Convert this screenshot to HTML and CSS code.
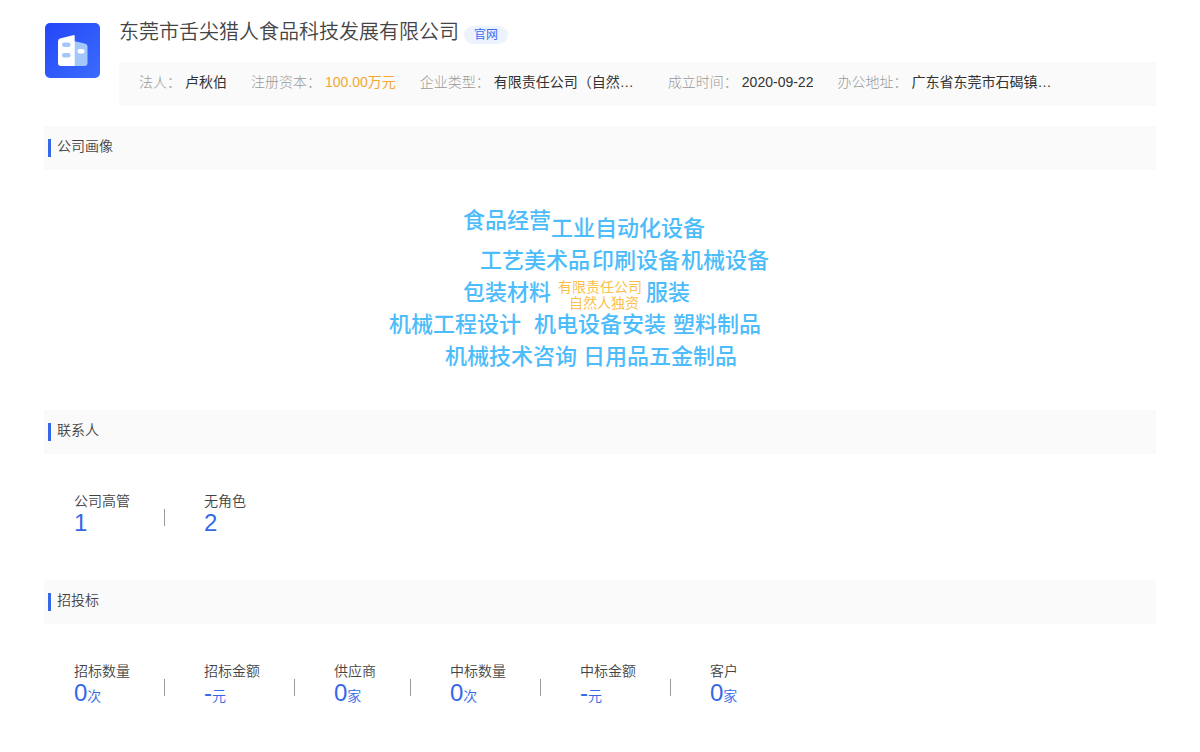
FILE: index.html
```html
<!DOCTYPE html>
<html lang="zh-CN">
<head>
<meta charset="utf-8">
<title>东莞市舌尖猎人食品科技发展有限公司</title>
<link rel="stylesheet" href="styles.css">
</head>
<body>
<main class="page">
  <header class="company">
    <svg class="logo" viewBox="0 0 55 55" aria-hidden="true">
      <defs>
        <linearGradient id="logo-bg" x1="0" y1="0" x2="1" y2="1">
          <stop offset="0" stop-color="#2446f8"/>
          <stop offset="1" stop-color="#3a6cfb"/>
        </linearGradient>
      </defs>
      <rect width="55" height="55" rx="5" fill="url(#logo-bg)"/>
      <path d="M29 18L40.500 20.800Q42.500 21.400 42.500 23.500V40Q42.500 43 39.500 43H29Z" fill="#a3c6fb"/>
      <path d="M15 15.600Q13 16.200 13 18.500V40Q13 43 16 43H29.700V13.300Q29.700 11.800 28 12.200Z" fill="#fff"/>
      <rect x="17" y="19.500" width="8.500" height="4.400" rx="2.200" fill="#a3c6fb"/>
      <rect x="17" y="30" width="8.500" height="4.400" rx="2.200" fill="#a3c6fb"/>
      <rect x="32.500" y="26" width="7" height="4.400" rx="2.200" fill="#fff"/>
    </svg>
    <div class="company-body">
      <div class="title-row">
        <h1 class="title">东莞市舌尖猎人食品科技发展有限公司</h1>
        <a class="site-link" href="#">官网</a>
      </div>
      <dl class="facts">
        <div class="fact"><dt>法人：</dt><dd>卢秋伯</dd></div>
        <div class="fact"><dt>注册资本：</dt><dd class="money">100.00万元</dd></div>
        <div class="fact"><dt>企业类型：</dt><dd class="clipped">有限责任公司（自然…</dd></div>
        <div class="fact"><dt>成立时间：</dt><dd>2020-09-22</dd></div>
        <div class="fact"><dt>办公地址：</dt><dd class="clipped">广东省东莞市石碣镇…</dd></div>
      </dl>
    </div>
  </header>

  <section class="section">
    <h2 class="section-title">公司画像</h2>
    <div class="cloud-area">
      <div class="cloud">
        <span class="word w1">食品经营</span>
        <span class="word w2">工业自动化设备</span>
        <span class="word w3">工艺美术品</span>
        <span class="word w3b">印刷设备</span>
        <span class="word w3c">机械设备</span>
        <span class="word w4">包装材料</span>
        <span class="word core core-type">有限责任公司</span>
        <span class="word core core-owner">自然人独资</span>
        <span class="word w5">服装</span>
        <span class="word w6">机械工程设计</span>
        <span class="word w7">机电设备安装</span>
        <span class="word w8">塑料制品</span>
        <span class="word w9">机械技术咨询</span>
        <span class="word w10">日用品</span>
        <span class="word w11">五金制品</span>
      </div>
    </div>
  </section>

  <section class="section">
    <h2 class="section-title">联系人</h2>
    <ul class="stats">
      <li class="stat"><span class="label">公司高管</span><span class="value">1</span></li>
      <li class="stat"><span class="label">无角色</span><span class="value">2</span></li>
    </ul>
  </section>

  <section class="section">
    <h2 class="section-title">招投标</h2>
    <ul class="stats">
      <li class="stat"><span class="label">招标数量</span><span class="value">0<small>次</small></span></li>
      <li class="stat"><span class="label">招标金额</span><span class="value">-<small>元</small></span></li>
      <li class="stat"><span class="label">供应商</span><span class="value">0<small>家</small></span></li>
      <li class="stat"><span class="label">中标数量</span><span class="value">0<small>次</small></span></li>
      <li class="stat"><span class="label">中标金额</span><span class="value">-<small>元</small></span></li>
      <li class="stat"><span class="label">客户</span><span class="value">0<small>家</small></span></li>
    </ul>
  </section>
</main>
</body>
</html>
```
FILE: styles.css
```css
* {
  box-sizing: border-box;
}

body,
h1,
h2,
dl,
dd,
ul {
  margin: 0;
  padding: 0;
}

body {
  background: #fff;
  color: #444;
  font: 350 14px/20px "Liberation Sans", "Noto Sans CJK SC", sans-serif;
}

.page {
  padding: 16px 44px 0;
}

.company {
  display: flex;
  gap: 19px;
  padding-left: 1px;
  margin-bottom: 20px;
}

.logo {
  flex: none;
  width: 55px;
  height: 55px;
  margin-top: 7px;
}

.company-body {
  flex: 1;
  min-width: 0;
}

.title-row {
  display: flex;
  align-items: flex-start;
  gap: 5px;
  margin-bottom: 14px;
}

.title {
  font-size: 20px;
  font-weight: 350;
  line-height: 32px;
}

.site-link {
  margin-top: 10px;
  padding: 0 10px;
  border-radius: 9px;
  background: #edf3fe;
  color: #3a6cf0;
  font-size: 12px;
  font-weight: 400;
  line-height: 18px;
  text-decoration: none;
}

.facts {
  display: flex;
  gap: 24px;
  height: 44px;
  padding: 10px 20px;
  background: #fafafa;
}

.fact {
  display: flex;
  gap: 4px;
  white-space: nowrap;
}

.fact dt {
  color: #999;
  font-weight: 300;
}

.fact dd {
  color: #333;
  font-weight: 400;
}

.fact .money {
  color: #f0a832;
}

.fact .clipped {
  width: 150px;
}

.section-title {
  display: flex;
  align-items: flex-start;
  gap: 6px;
  height: 44px;
  padding: 10px 4px;
  background: #fafafa;
  font-size: 14px;
  font-weight: 350;
  line-height: 20px;
}

.section-title::before {
  content: "";
  width: 3px;
  height: 18px;
  margin-top: 3px;
  background: #3568e8;
}

.cloud-area {
  display: flex;
  justify-content: center;
  height: 240px;
}

.cloud {
  position: relative;
  width: 440px;
}

.word {
  position: absolute;
  color: #4dbcfb;
  font-size: 22px;
  font-weight: 500;
  line-height: 32px;
  white-space: nowrap;
}

.w1 { left: 83px; top: 35px; }
.w2 { left: 171px; top: 43px; }
.w3 { left: 100px; top: 75px; }
.w3b { left: 212px; top: 75px; }
.w3c { left: 301px; top: 75px; }
.w4 { left: 83px; top: 107px; }
.w5 { left: 266px; top: 107px; }
.w6 { left: 9px; top: 139px; }
.w7 { left: 154px; top: 139px; }
.w8 { left: 293px; top: 139px; }
.w9 { left: 65px; top: 171px; }
.w10 { left: 203px; top: 171px; }
.w11 { left: 269px; top: 171px; }

.core {
  color: #fbbf4b;
  font-size: 14px;
  font-weight: 400;
  line-height: 16px;
}

.core-type { left: 178px; top: 109px; }
.core-owner { left: 189px; top: 125px; }

.stats {
  display: flex;
  height: 126px;
  padding: 37px 30px;
  list-style: none;
}

.stat {
  display: flex;
  flex-direction: column;
}

.stat:not(:last-child) {
  padding-right: 34px;
  margin-right: 39px;
  border-right: 1px solid #999;
  border-image: linear-gradient(transparent 18px, #999 18px, #999 35px, transparent 35px) 1;
}

.label {
  line-height: 20px;
}

.value {
  color: #3568e8;
  font-size: 24px;
  line-height: 24px;
}

.value small {
  font-size: 14px;
}
```
